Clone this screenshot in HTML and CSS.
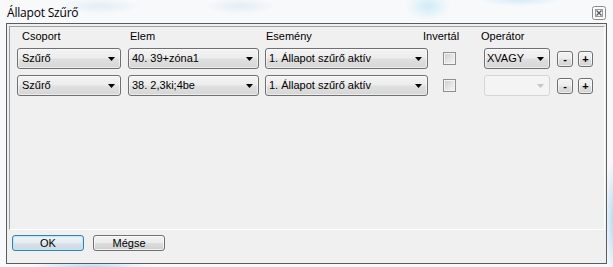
FILE: index.html
```html
<!DOCTYPE html>
<html lang="hu">
<head>
<meta charset="utf-8">
<title>Állapot Szűrő</title>
<link rel="stylesheet" href="styles.css">
</head>
<body>
<div class="window">
  <div class="titlebar">
    <span class="title">Állapot Szűrő</span>
    <span class="close">
      <svg width="14" height="14" viewBox="0 0 14 14">
        <rect x="0.5" y="0.5" width="13" height="13" rx="2" fill="#fafafa" stroke="#8a8a8a"/>
        <rect x="3.5" y="3.5" width="7" height="7" fill="none" stroke="#9a9a9a"/>
        <path d="M4.5 4.5l5 5M9.5 4.5l-5 5" stroke="#555" stroke-width="1.2"/>
      </svg>
    </span>
  </div>
  <div class="client">
    <div class="panel">
      <div class="header">
        <span class="h h1">Csoport</span>
        <span class="h h2">Elem</span>
        <span class="h h3">Esemény</span>
        <span class="h h4">Invertál</span>
        <span class="h h5">Operátor</span>
      </div>
      <div class="row">
        <div class="combo c1"><span class="txt">Szűrő</span><svg class="arr" width="7" height="4" viewBox="0 0 7 4"><path d="M0 0h7L3.5 4z"/></svg></div>
        <div class="combo c2"><span class="txt">40. 39+zóna1</span><svg class="arr" width="7" height="4" viewBox="0 0 7 4"><path d="M0 0h7L3.5 4z"/></svg></div>
        <div class="combo c3"><span class="txt">1. Állapot szűrő aktív</span><svg class="arr" width="7" height="4" viewBox="0 0 7 4"><path d="M0 0h7L3.5 4z"/></svg></div>
        <span class="check"></span>
        <div class="combo c4"><span class="txt">XVAGY</span><svg class="arr" width="7" height="4" viewBox="0 0 7 4"><path d="M0 0h7L3.5 4z"/></svg></div>
        <span class="sbtn minus">-</span>
        <span class="sbtn plus">+</span>
      </div>
      <div class="row">
        <div class="combo c1"><span class="txt">Szűrő</span><svg class="arr" width="7" height="4" viewBox="0 0 7 4"><path d="M0 0h7L3.5 4z"/></svg></div>
        <div class="combo c2"><span class="txt">38. 2,3ki;4be</span><svg class="arr" width="7" height="4" viewBox="0 0 7 4"><path d="M0 0h7L3.5 4z"/></svg></div>
        <div class="combo c3"><span class="txt">1. Állapot szűrő aktív</span><svg class="arr" width="7" height="4" viewBox="0 0 7 4"><path d="M0 0h7L3.5 4z"/></svg></div>
        <span class="check"></span>
        <div class="combo c4 disabled"><span class="txt"></span><svg class="arr" width="7" height="4" viewBox="0 0 7 4"><path d="M0 0h7L3.5 4z"/></svg></div>
        <span class="sbtn minus">-</span>
        <span class="sbtn plus">+</span>
      </div>
    </div>
    <div class="buttons">
      <span class="btn default">OK</span>
      <span class="btn">Mégse</span>
    </div>
  </div>
</div>
</body>
</html>
```
FILE: styles.css
```css
* { box-sizing: border-box; }
html, body { margin: 0; padding: 0; }
body {
  width: 613px;
  height: 267px;
  overflow: hidden;
  font-family: "Liberation Sans", Arial, sans-serif;
  font-size: 11px;
  color: #000;
}
.window {
  width: 613px;
  height: 267px;
  display: flex;
  flex-direction: column;
  background:
    radial-gradient(ellipse 22px 14px at 428px 6px, rgba(150, 215, 245, 0.4), rgba(150, 215, 245, 0) 100%),
    radial-gradient(ellipse 40px 6px at 520px 0px, rgba(160, 215, 245, 0.4), rgba(160, 215, 245, 0) 100%),
    radial-gradient(ellipse 40px 8px at 100px 6px, rgba(190, 215, 235, 0.35), rgba(190, 215, 235, 0) 100%),
    radial-gradient(ellipse 35px 8px at 240px 6px, rgba(190, 215, 235, 0.35), rgba(190, 215, 235, 0) 100%),
    radial-gradient(ellipse 60px 6px at 90px 267px, rgba(140, 195, 240, 0.6), rgba(140, 195, 240, 0) 100%),
    radial-gradient(ellipse 8px 60px at 613px 220px, rgba(140, 200, 240, 0.6), rgba(140, 200, 240, 0) 100%),
    #f7f9fb;
}
.titlebar {
  height: 23px;
  display: flex;
  align-items: flex-start;
  justify-content: space-between;
  padding-left: 7px;
  padding-right: 7px;
}
.title {
  font-family: "Open Sans", "Noto Sans", sans-serif;
  font-size: 12px;
  line-height: 16px;
  margin-top: 5px;
  letter-spacing: -0.2px;
  color: #000;
}
.close {
  display: block;
  width: 14px;
  height: 14px;
  margin-top: 6px;
}
.close svg { display: block; }
.client {
  margin: 0 6px;
  height: 241px;
  border: 1px solid #5c5c5c;
  background: #f0f0f0;
  display: flex;
  flex-direction: column;
}
.panel {
  margin: 2px 1px 0 2px;
  height: 204px;
  border-top: 1px solid #a0a0a0;
  border-left: 1px solid #a0a0a0;
  border-right: 1px solid #ffffff;
  border-bottom: 1px solid #ffffff;
  padding: 3px 0 0 7px;
}
.header {
  display: flex;
  height: 13px;
  line-height: 13px;
  margin-bottom: 5px;
}
.h { display: block; white-space: nowrap; }
.h1 { width: 111px; padding-left: 5px; }
.h2 { width: 137px; padding-left: 2px; }
.h3 { width: 158px; padding-left: 1px; }
.h4 { width: 58px; }
.h5 { width: 80px; }
.row {
  display: flex;
  align-items: center;
  height: 21px;
  margin-bottom: 6px;
}
.combo {
  height: 21px;
  border: 1px solid #707070;
  border-radius: 3px;
  background: linear-gradient(to bottom, #f4f4f4 0%, #ececec 48%, #e0e0e0 52%, #d6d6d6 100%);
  box-shadow: inset 0 0 0 1px rgba(255, 255, 255, 0.55);
  display: flex;
  align-items: center;
  justify-content: space-between;
  padding-right: 5px;
  white-space: nowrap;
  overflow: hidden;
}
.combo .txt { line-height: 13px; }
.combo .arr { flex: none; fill: #000; }
.c1 { width: 104px; padding-left: 4px; }
.c2 { width: 131px; margin-left: 7px; padding-left: 3px; }
.c3 { width: 163px; margin-left: 6px; padding-left: 3px; }
.c4 { width: 66px; margin-left: 28px; padding-left: 2px; }
.combo.disabled {
  border-color: #d5d5d5;
  background: #f4f4f4;
  box-shadow: none;
}
.combo.disabled .arr { fill: #c6c6c6; }
.check {
  display: block;
  width: 13px;
  height: 13px;
  margin-left: 15px;
  border: 1px solid #8f8f8f;
  background: linear-gradient(135deg, #c8ccd2 0%, #e4e6e8 55%, #f6f6f6 100%);
  box-shadow: inset 0 0 0 1px #f4f4f4;
}
.sbtn {
  display: flex;
  align-items: center;
  justify-content: center;
  width: 16px;
  height: 16px;
  border: 1px solid #707070;
  border-radius: 3px;
  background: linear-gradient(to bottom, #f4f4f4 0%, #ececec 48%, #e0e0e0 52%, #d2d2d2 100%);
  box-shadow: inset 0 0 0 1px rgba(255, 255, 255, 0.6);
  font-size: 11px;
  line-height: 12px;
  font-weight: bold;
}
.minus { margin-left: 7px; }
.plus { margin-left: 5px; width: 15px; }
.buttons {
  display: flex;
  padding: 5px 0 0 5px;
}
.btn {
  display: flex;
  align-items: center;
  justify-content: center;
  width: 72px;
  height: 16px;
  border: 1px solid #707070;
  border-radius: 3px;
  background: linear-gradient(to bottom, #f2f2f2 0%, #ebebeb 48%, #dddddd 52%, #cfcfcf 100%);
  box-shadow: inset 0 0 0 1px rgba(255, 255, 255, 0.7);
  line-height: 13px;
  margin-right: 9px;
}
.btn.default {
  border-color: #3c7fb1;
  background: linear-gradient(to bottom, #eef3f7 0%, #e6ecf1 48%, #d9e2e9 52%, #cfd9e1 100%);
  box-shadow: inset 0 0 0 1px #b9e9f9;
}
```
